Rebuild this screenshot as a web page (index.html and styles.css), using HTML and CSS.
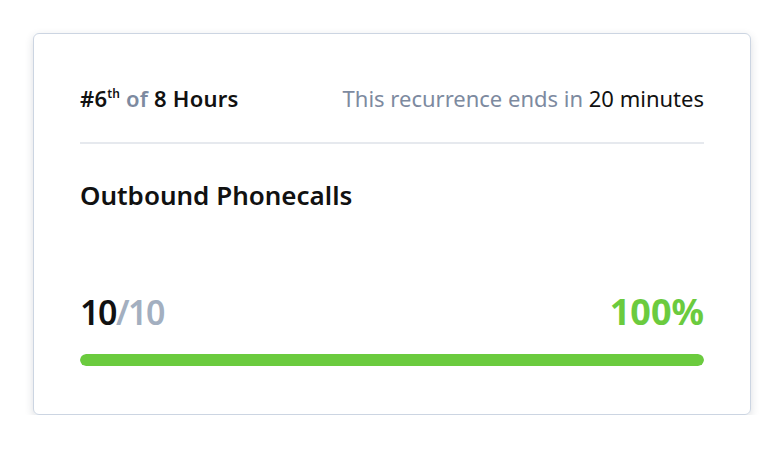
FILE: index.html
```html
<!DOCTYPE html>
<html>
<head>
<meta charset="utf-8">
<link rel="stylesheet" href="styles.css">
</head>
<body>
<div class="card">
  <div class="header">
    <div class="occurrence">#6<sup>th</sup> <span class="muted">of</span> 8 Hours</div>
    <div class="ends"><span class="muted">This recurrence ends in</span> 20 minutes</div>
  </div>
  <div class="title">Outbound Phonecalls</div>
  <div class="stats">
    <div class="count">10<span class="total">/10</span></div>
    <div class="percent">100%</div>
  </div>
  <div class="bar"><div class="fill" style="width:100%"></div></div>
</div>
</body>
</html>
```
FILE: styles.css
```css
html, body {
  margin: 0;
  padding: 0;
  background: #ffffff;
}
body {
  padding: 33px 0 0 33px;
  font-family: "Noto Sans", "Open Sans", sans-serif;
  color: #111111;
}
.card {
  box-sizing: border-box;
  width: 718px;
  height: 382px;
  border: 1.5px solid #ccd5e2;
  border-radius: 6px;
  box-shadow: 0 3px 8px rgba(40, 50, 70, 0.16);
  padding: 0 46px;
  display: flex;
  flex-direction: column;
}
.header {
  display: flex;
  justify-content: space-between;
  align-items: baseline;
  height: 110px;
  box-sizing: border-box;
  padding-top: 49px;
  border-bottom: 2px solid #e6e9ee;
  font-size: 22px;
  line-height: 30px;
}
.occurrence {
  font-weight: 600;
  letter-spacing: 0.2px;
}
.occurrence sup {
  font-size: 12px;
  vertical-align: 9px;
  line-height: 0;
}
.muted {
  color: #7d8aa0;
}
.ends {
  font-weight: 400;
}
.title {
  margin-top: 34px;
  font-size: 26px;
  line-height: 34px;
  font-weight: 600;
}
.stats {
  margin-top: 80px;
  display: flex;
  justify-content: space-between;
  align-items: baseline;
  font-size: 36px;
  line-height: 40px;
}
.count {
  font-size: 34px;
  font-weight: 600;
  letter-spacing: -1.5px;
}
.total {
  color: #a3afc0;
}
.percent {
  color: #6bcb3e;
  font-weight: 700;
}
.bar {
  margin-top: 22px;
  height: 12px;
  border-radius: 6px;
  background: #e8edf2;
  overflow: hidden;
}
.fill {
  height: 100%;
  border-radius: 6px;
  background: #6bcb3e;
}
```
